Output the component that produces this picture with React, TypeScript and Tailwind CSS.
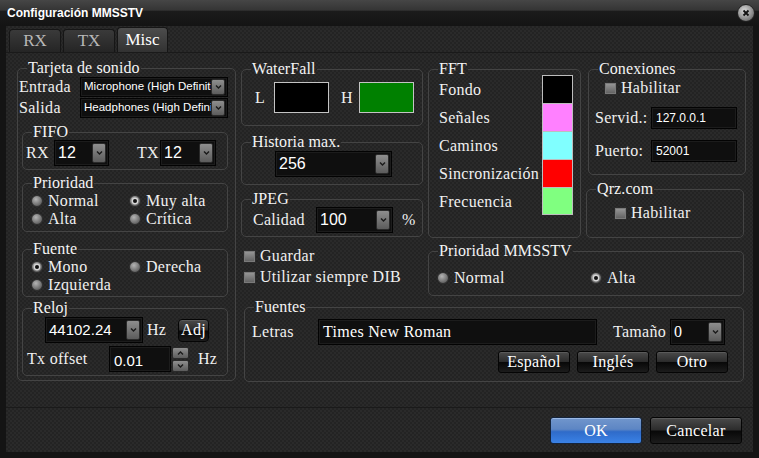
import type { ReactNode } from "react";

const sans = "font-['Liberation_Sans',Arial,sans-serif] tracking-normal";
const texture =
  "bg-[repeating-conic-gradient(#2a2a2a_0%_25%,#232323_0%_50%)] bg-[length:4px_4px]";

function Frame({
  title,
  className = "",
  children,
}: {
  title: string;
  className?: string;
  children?: ReactNode;
}) {
  return (
    <fieldset className={`min-w-0 border border-[#444444] rounded-[5px] ${className}`}>
      <legend className="ml-[9px] px-px leading-[16px] text-[16px] tracking-[0.1px] text-[#f4f4f4]">{title}</legend>
      {children}
    </fieldset>
  );
}

function Chevron({ up }: { up?: boolean }) {
  return (
    <svg width="7" height="4" viewBox="0 0 7 4">
      <path
        d={up ? "M1 3.5 3.5 1 6 3.5" : "M1 0.5 3.5 3 6 0.5"}
        fill="none"
        stroke="#1a1a1a"
        strokeWidth="1.4"
      />
    </svg>
  );
}

function DropBtn({ className = "" }: { className?: string }) {
  return (
    <span
      className={`w-[14px] mr-[2px] shrink-0 rounded-[2px] border border-[#2a2a2a] bg-[linear-gradient(#8e8e8e,#5c5c5c)] flex items-center justify-center ${className}`}
    >
      <Chevron />
    </span>
  );
}

function Combo({
  value,
  className = "",
  textClass = `${sans} text-[15px]`,
  btnH = "h-[20px]",
}: {
  value: string;
  className?: string;
  textClass?: string;
  btnH?: string;
}) {
  return (
    <div className={`flex items-center bg-[#0f0f0f] border border-[#030303] shadow-[inset_0_0_0_1px_#1c1c1c] ${className}`}>
      <span className={`flex-1 min-w-0 overflow-hidden whitespace-nowrap pl-[3px] text-white ${textClass}`}>
        {value}
      </span>
      <DropBtn className={btnH} />
    </div>
  );
}

function Field({ value, className = "", textClass = `${sans} text-[12px]` }: { value: string; className?: string; textClass?: string }) {
  return (
    <div className={`flex items-center bg-[#0f0f0f] border border-[#030303] shadow-[inset_0_0_0_1px_#1c1c1c] pl-[4px] text-white ${textClass} ${className}`}>
      {value}
    </div>
  );
}

function Radio({ checked, label }: { checked?: boolean; label: string }) {
  return (
    <label className="flex items-center gap-[5px] whitespace-nowrap">
      <svg width="12" height="12" viewBox="0 0 12 12" className="shrink-0">
        <defs>
          <radialGradient id="rg" cx="0.4" cy="0.35" r="0.7">
            <stop offset="0" stopColor="#b4b4b4" />
            <stop offset="1" stopColor="#555" />
          </radialGradient>
        </defs>
        <circle cx="6" cy="6" r="5.5" fill="url(#rg)" stroke="#2e2e2e" />
        {checked && (
          <>
            <circle cx="6" cy="6" r="3.4" fill="#d6d6d6" />
            <circle cx="6" cy="6" r="2" fill="#111" />
          </>
        )}
      </svg>
      <span>{label}</span>
    </label>
  );
}

function Check({ label }: { label: string }) {
  return (
    <label className="flex items-center gap-[4px] whitespace-nowrap">
      <span className="w-[13px] h-[13px] shrink-0 border border-[#2b2b2b] bg-[linear-gradient(#9a9a9a,#5e5e5e)] shadow-[inset_0_0_0_1px_#7a7a7a]" />
      <span>{label}</span>
    </label>
  );
}

function Btn({ label, className = "" }: { label: string; className?: string }) {
  return (
    <button
      className={`flex items-center justify-center rounded-[3px] border border-[#050505] shadow-[inset_0_1px_0_#5a5a5a] bg-[linear-gradient(#4a4a4a,#2c2c2c_48%,#080808_52%,#1c1c1c)] text-white text-[16px] ${className}`}
    >
      {label}
    </button>
  );
}

function Swatch({ color, last }: { color: string; last?: boolean }) {
  return (
    <span
      className={`w-[31px] h-[28px] shrink-0 border-x border-t border-[#bdbdbd] ${last ? "border-b" : ""}`}
      style={{ background: color }}
    />
  );
}

const fft = [
  { name: "Fondo", color: "#000000" },
  { name: "Señales", color: "#ff80ff" },
  { name: "Caminos", color: "#80ffff" },
  { name: "Sincronización", color: "#ff0000" },
  { name: "Frecuencia", color: "#80ff80" },
];

export default function App() {
  return (
    <div className="w-[759px] h-[458px] bg-[#141414] flex flex-col overflow-hidden font-['Liberation_Serif','Times_New_Roman',serif] text-[16px] tracking-[0.3px] text-[#f0f0f0]">
      {/* title bar */}
      <div className="h-[25px] shrink-0 flex items-center justify-between pl-[7px] pr-[4px] bg-[linear-gradient(#464646,#353535_40%,#1b1b1b_46%,#141414)]">
        <span className={`${sans} text-[12px] font-bold text-white tracking-[-0.2px]`}>Configuración MMSSTV</span>
        <span className="w-[18px] h-[18px] rounded-full bg-[radial-gradient(circle_at_40%_35%,#d8d8d8,#8a8a8a_60%,#4a4a4a)] border border-[#222] flex items-center justify-center">
          <svg width="8" height="8" viewBox="0 0 8 8">
            <path d="M1.5 1.5 6.5 6.5M6.5 1.5 1.5 6.5" stroke="#111" strokeWidth="1.8" />
          </svg>
        </span>
      </div>

      <div className={`mx-[6px] mt-px h-[426px] flex flex-col ${texture}`}>
        {/* tabs */}
        <div className="h-[26px] shrink-0 flex items-end gap-[2px] pl-[3px] tracking-normal">
          <div className="w-[52px] h-[23px] rounded-t-[4px] border border-b-0 border-[#161616] bg-[linear-gradient(#3a3a3a,#252525)] text-[#b8b8b8] text-[17px] flex items-center justify-center">
            RX
          </div>
          <div className="w-[52px] h-[23px] rounded-t-[4px] border border-b-0 border-[#161616] bg-[linear-gradient(#3a3a3a,#252525)] text-[#b8b8b8] text-[17px] flex items-center justify-center">
            TX
          </div>
          <div className="w-[51px] h-[25px] rounded-t-[4px] border border-b-0 border-[#161616] bg-[linear-gradient(#4c4c4c,#323232)] text-white text-[17px] flex items-center justify-center">
            Misc
          </div>
        </div>

        {/* tab page */}
        <div className="h-[356px] shrink-0 border-y border-[#1a1a1a] flex items-start pl-[11px] pt-[7px]">
          {/* sound card column */}
          <Frame title="Tarjeta de sonido" className="w-[219px] h-[321px] shrink-0">
            <div className="flex items-center h-[20px] mt-[1px]">
              <span className="w-[62px] pl-px">Entrada</span>
              <Combo value="Microphone (High Definition Audio)" className="w-[148px] h-[20px]" textClass={`${sans} text-[11.5px]`} btnH="h-[16px]" />
            </div>
            <div className="flex items-center h-[20px] mt-px">
              <span className="w-[62px] pl-px">Salida</span>
              <Combo value="Headphones (High Definition Audio)" className="w-[148px] h-[20px]" textClass={`${sans} text-[11.5px]`} btnH="h-[16px]" />
            </div>

            <Frame title="FIFO" className="ml-[4px] mt-[6px] w-[206px] h-[46px]">
              <div className="flex items-center h-[26px]">
                <span className="w-[31px] pl-[3px]">RX</span>
                <Combo value="12" className="w-[55px] h-[26px]" textClass={`${sans} text-[16px]`} />
                <span className="ml-[28px] w-[23px]">TX</span>
                <Combo value="12" className="w-[56px] h-[26px]" textClass={`${sans} text-[16px]`} />
              </div>
            </Frame>

            <Frame title="Prioridad" className="ml-[4px] mt-[5px] w-[206px] h-[57px]">
              <div className="grid grid-cols-[98px_1fr] auto-rows-[18px] items-center pl-[8px] mt-px">
                <Radio label="Normal" />
                <Radio label="Muy alta" checked />
                <Radio label="Alta" />
                <Radio label="Crítica" />
              </div>
            </Frame>

            <Frame title="Fuente" className="ml-[4px] mt-[9px] w-[206px] h-[56px]">
              <div className="grid grid-cols-[98px_1fr] auto-rows-[18px] items-center pl-[8px] mt-px">
                <Radio label="Mono" checked />
                <Radio label="Derecha" />
                <Radio label="Izquierda" />
              </div>
            </Frame>

            <Frame title="Reloj" className="ml-[4px] mt-[3px] w-[206px] h-[76px]">
              <div className="flex items-center h-[26px] mt-px">
                <Combo value="44102.24" className="ml-[22px] w-[98px] h-[26px]" />
                <span className="w-[35px] pl-[4px]">Hz</span>
                <Btn label="Adj" className="w-[31px] h-[23px] rounded-[4px]" />
              </div>
              <div className="flex items-center h-[26px] mt-[3px]">
                <span className="w-[86px] pl-[4px] whitespace-nowrap">Tx offset</span>
                <Field value="0.01" className={`w-[62px] h-[26px] !items-start pt-[3px]`} textClass={`${sans} text-[15px]`} />
                <div className="ml-px flex flex-col gap-px">
                  <span className="w-[17px] h-[12px] rounded-[2px] border border-[#2a2a2a] bg-[linear-gradient(#8e8e8e,#5c5c5c)] flex items-center justify-center">
                    <Chevron up />
                  </span>
                  <span className="w-[17px] h-[12px] rounded-[2px] border border-[#2a2a2a] bg-[linear-gradient(#8e8e8e,#5c5c5c)] flex items-center justify-center">
                    <Chevron />
                  </span>
                </div>
                <span className="ml-[9px]">Hz</span>
              </div>
            </Frame>
          </Frame>

          {/* right side of the page */}
          <div className="ml-[5px] mt-px w-[505px] flex flex-col">
            <div className="flex items-start h-[177px]">
              <div className="w-[183px] flex flex-col">
                <Frame title="WaterFall" className="h-[65px]">
                  <div className="flex items-center h-[31px] mt-[5px]">
                    <span className="w-[32px] pl-[13px]">L</span>
                    <span className="w-[55px] h-[31px] bg-black border border-[#c4c4c4]" />
                    <span className="w-[30px] pl-[12px]">H</span>
                    <span className="w-[55px] h-[31px] bg-[#008000] border border-[#c4c4c4]" />
                  </div>
                </Frame>
                <Frame title="Historia max." className="mt-[8px] h-[51px]">
                  <Combo value="256" className="ml-[33px] mt-px w-[117px] h-[26px]" textClass={`${sans} text-[16px]`} />
                </Frame>
                <Frame title="JPEG" className="mt-[6px] h-[46px]">
                  <div className="flex items-center h-[26px]">
                    <span className="w-[74px] pl-[11px]">Calidad</span>
                    <Combo value="100" className="w-[77px] h-[26px]" textClass={`${sans} text-[16px]`} />
                    <span className="ml-[9px]">%</span>
                  </div>
                </Frame>
              </div>

              <Frame title="FFT" className="ml-[5px] w-[153px] h-[177px] shrink-0">
                <div className="-mt-[2px] flex flex-col">
                  {fft.map((f, i) => (
                    <div key={f.name} className="flex items-center h-[28px]">
                      <span className="w-[113px] pl-[10px] pt-[2px] whitespace-nowrap">{f.name}</span>
                      <Swatch color={f.color} last={i === fft.length - 1} />
                    </div>
                  ))}
                </div>
              </Frame>

              <div className="ml-[5px] w-[160px] flex flex-col">
                <Frame title="Conexiones" className="ml-[2px] w-[158px] h-[114px]">
                  <div className="flex items-center h-[16px] mt-[3px] pl-[15px]">
                    <Check label="Habilitar" />
                  </div>
                  <div className="flex items-center h-[22px] mt-[11px]">
                    <span className="w-[62px] pl-[6px] whitespace-nowrap">Servid.:</span>
                    <Field value="127.0.0.1" className="w-[86px] h-[22px]" />
                  </div>
                  <div className="flex items-center h-[22px] mt-[11px]">
                    <span className="w-[62px] pl-[6px] whitespace-nowrap">Puerto:</span>
                    <Field value="52001" className="w-[86px] h-[22px]" />
                  </div>
                </Frame>
                <Frame title="Qrz.com" className="mt-[6px] w-[158px] h-[57px]">
                  <div className="flex items-center h-[16px] mt-[8px] pl-[27px]">
                    <Check label="Habilitar" />
                  </div>
                </Frame>
              </div>
            </div>

            <div className="flex items-start">
              <div className="w-[187px] pt-[10px] pl-[2px] flex flex-col gap-[5px]">
                <div className="h-[16px] flex items-center">
                  <Check label="Guardar" />
                </div>
                <div className="h-[16px] flex items-center">
                  <Check label="Utilizar siempre DIB" />
                </div>
              </div>
              <Frame title="Prioridad MMSSTV" className="mt-[5px] w-[316px] h-[53px]">
                <div className="grid grid-cols-[153px_1fr] h-[18px] items-center mt-[7px] pl-[8px]">
                  <Radio label="Normal" />
                  <Radio label="Alta" checked />
                </div>
              </Frame>
            </div>

            <Frame title="Fuentes" className="ml-[3px] mt-[3px] w-[500px] h-[83px]">
              <div className="flex items-center h-[26px] mt-[4px]">
                <span className="w-[73px] pl-[7px]">Letras</span>
                <Field value="Times New Roman" className="w-[279px] h-[26px]" textClass="text-[16px]" />
                <span className="ml-[16px] w-[57px]">Tamaño</span>
                <Combo value="0" className="w-[55px] h-[26px]" textClass="text-[16px]" />
              </div>
              <div className="flex justify-end gap-[7px] pr-[15px] mt-[6px]">
                <Btn label="Español" className="w-[72px] h-[22px]" />
                <Btn label="Inglés" className="w-[72px] h-[22px]" />
                <Btn label="Otro" className="w-[72px] h-[22px]" />
              </div>
            </Frame>
          </div>
        </div>

        {/* dialog buttons */}
        <div className="flex-1 flex justify-end items-start gap-[8px] pt-[9px] pr-[11px]">
          <button className="w-[92px] h-[27px] rounded-[3px] border border-[#14243c] shadow-[inset_0_1px_0_#9ab8e4] bg-[linear-gradient(#7196cc,#5d86c4_45%,#2f6bc9_55%,#3a82e6)] text-white text-[16px]">
            OK
          </button>
          <Btn label="Cancelar" className="w-[92px] h-[27px]" />
        </div>
      </div>
    </div>
  );
}
